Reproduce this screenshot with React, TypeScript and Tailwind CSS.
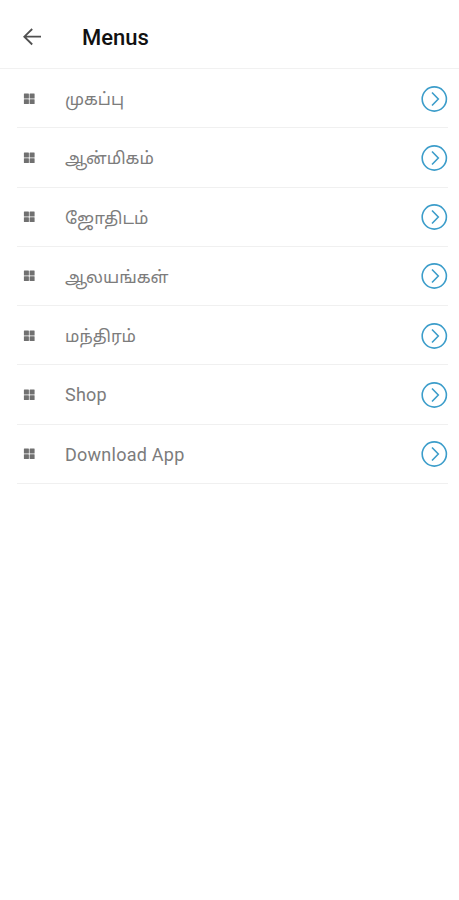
const menus = [
  { label: "முகப்பு", className: "pt-0.5 text-[16.8px]" },
  { label: "ஆன்மிகம்", className: "pt-0.5 text-[16.8px]" },
  { label: "ஜோதிடம்", className: "pt-0.5 text-[16.8px]" },
  { label: "ஆலயங்கள்", className: "pt-0.5 text-[16.8px]" },
  { label: "மந்திரம்", className: "pt-0.5 text-[16.8px]" },
  { label: "Shop", className: "text-[18px] tracking-[0.25px]" },
  { label: "Download App", className: "text-[18px] tracking-[0.25px]" },
];

function BackIcon() {
  return (
    <svg className="w-5 h-5 text-[#505050]" viewBox="0 0 20 20" fill="none" stroke="currentColor" strokeWidth="1.8">
      <path d="M19 9.7H2.5M10.2 2l-7.9 7.7 7.9 7.8" />
    </svg>
  );
}

function GridIcon() {
  return (
    <svg className="w-3 h-3 text-[#707070]" viewBox="0 0 12 12" fill="currentColor">
      <rect x="0.9" y="0.6" width="5" height="4.9" rx="0.5" />
      <rect x="6.6" y="0.6" width="5" height="4.9" rx="0.5" />
      <rect x="0.9" y="6.2" width="5" height="4.9" rx="0.5" />
      <rect x="6.6" y="6.2" width="5" height="4.9" rx="0.5" />
    </svg>
  );
}

function ChevronCircle() {
  return (
    <svg className="w-7 h-7 text-[#3c9dca]" viewBox="0 0 28 28" fill="none" stroke="currentColor" strokeWidth="1.6">
      <circle cx="14.3" cy="14" r="12.1" />
      <path d="M12 7.5l6.3 6.5-6.3 6.5" />
    </svg>
  );
}

export default function App() {
  return (
    <div className="min-h-[900px] bg-white font-[Roboto,'Noto_Sans_Tamil','Noto_Sans',sans-serif]">
      <header className="flex items-center h-[69px] pt-1.5 pl-[22px] border-b border-[#f1f1f1]">
        <BackIcon />
        <h1 className="ml-10 text-[22px] font-medium text-[#111111]">Menus</h1>
      </header>
      <ul className="pl-[17px] pr-[11px]">
        {menus.map(({ label, className }) => (
          <li key={label} className="flex items-center h-[59.25px] pt-px pl-1.5 border-b border-[#f0f0f0]">
            <GridIcon />
            <span className={`flex-1 ml-[30px] text-[#7c7c7c] ${className}`}>{label}</span>
            <ChevronCircle />
          </li>
        ))}
      </ul>
    </div>
  );
}
